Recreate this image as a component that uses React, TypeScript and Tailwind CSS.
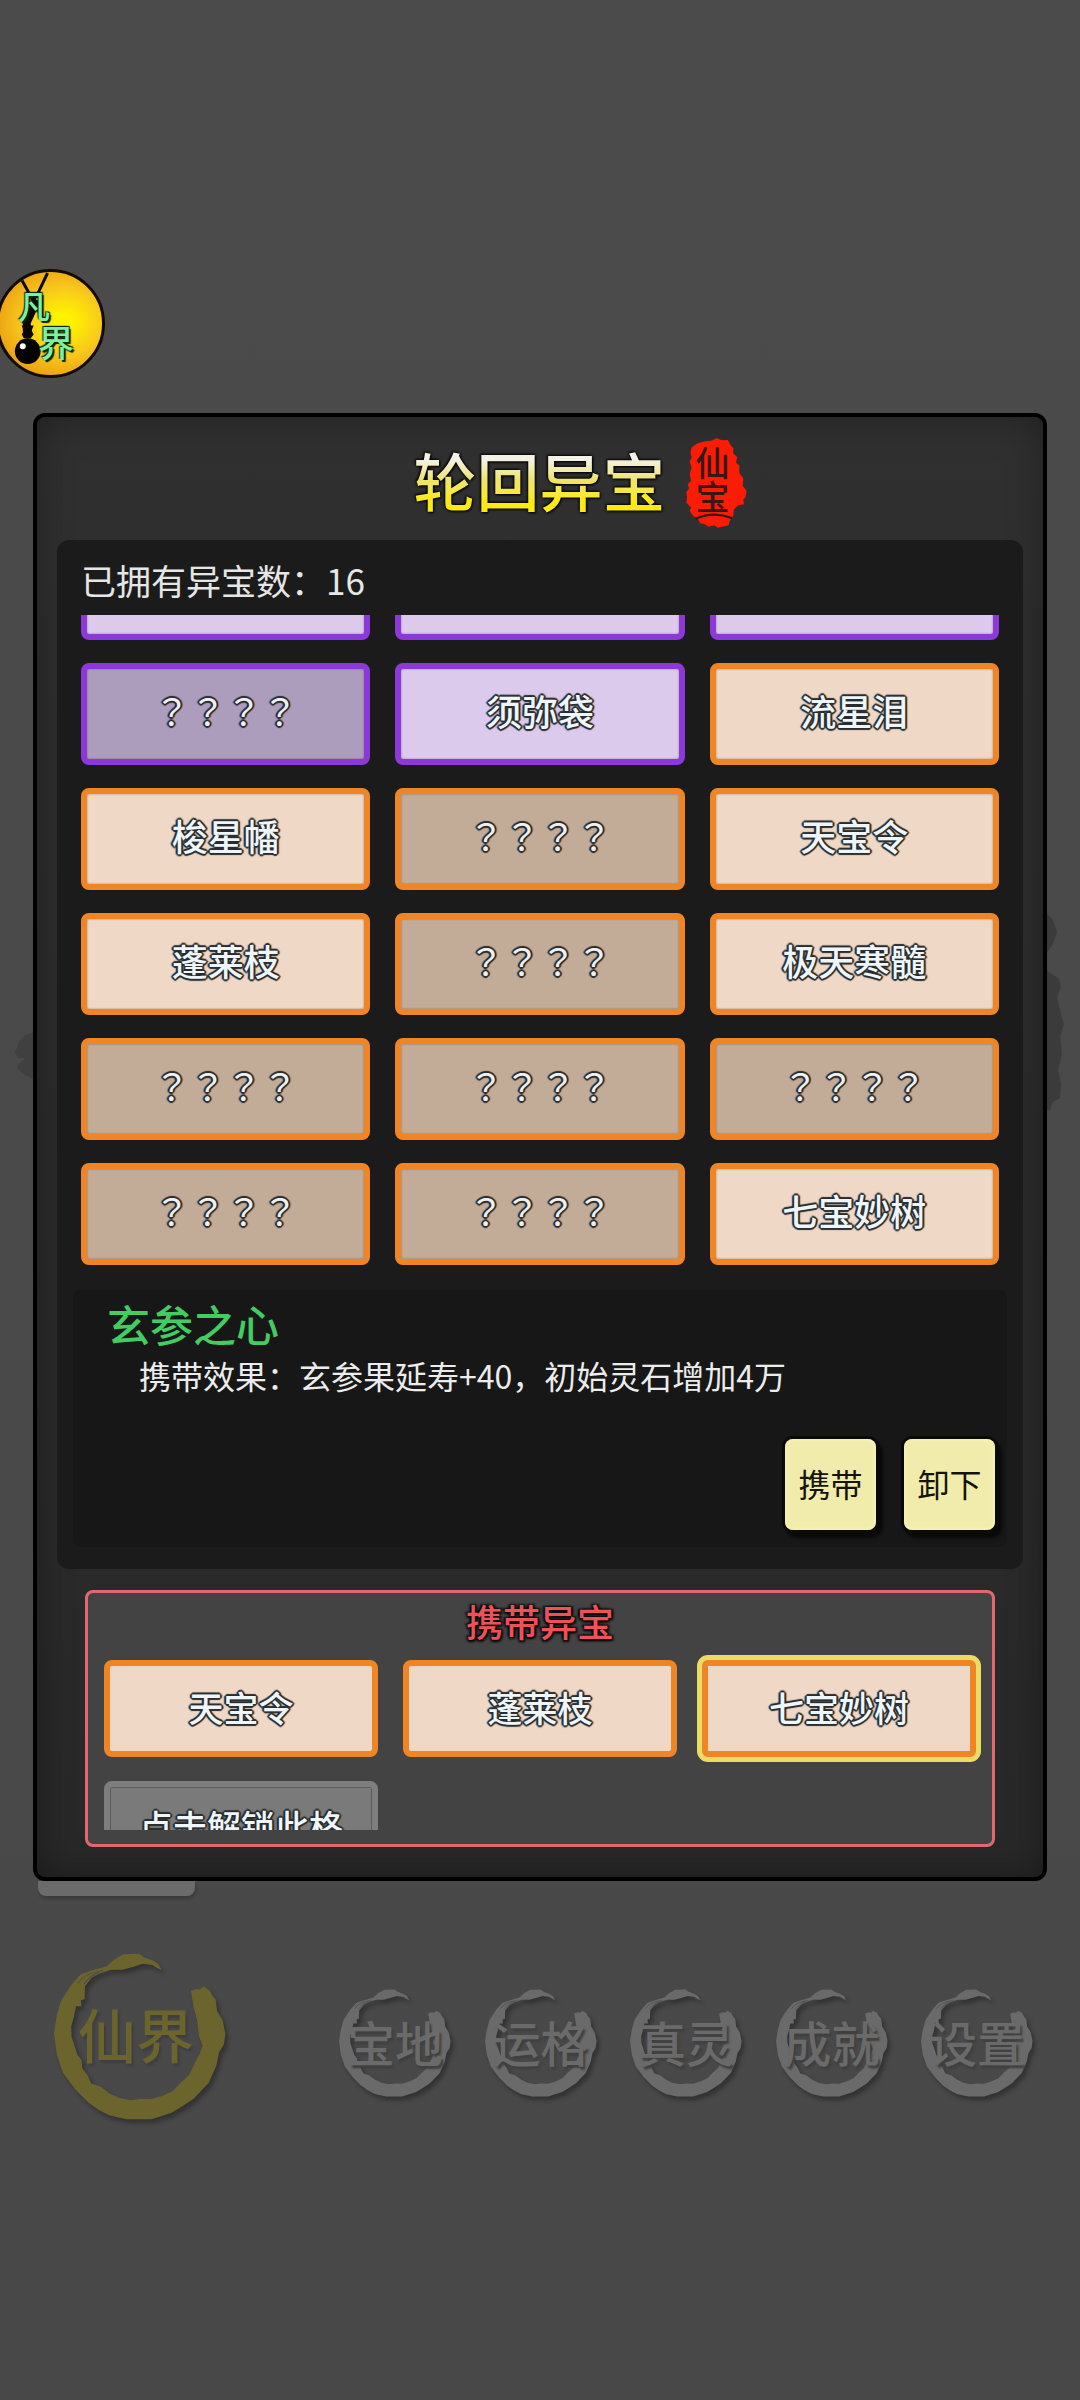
type Treasure = { name: string; tone: "purple" | "orange"; owned: boolean };

const UNKNOWN = "？？？？";

const treasures: Treasure[] = [
  { name: "", tone: "purple", owned: true },
  { name: "", tone: "purple", owned: true },
  { name: "", tone: "purple", owned: true },
  { name: UNKNOWN, tone: "purple", owned: false },
  { name: "须弥袋", tone: "purple", owned: true },
  { name: "流星泪", tone: "orange", owned: true },
  { name: "梭星幡", tone: "orange", owned: true },
  { name: UNKNOWN, tone: "orange", owned: false },
  { name: "天宝令", tone: "orange", owned: true },
  { name: "蓬莱枝", tone: "orange", owned: true },
  { name: UNKNOWN, tone: "orange", owned: false },
  { name: "极天寒髓", tone: "orange", owned: true },
  { name: UNKNOWN, tone: "orange", owned: false },
  { name: UNKNOWN, tone: "orange", owned: false },
  { name: UNKNOWN, tone: "orange", owned: false },
  { name: UNKNOWN, tone: "orange", owned: false },
  { name: UNKNOWN, tone: "orange", owned: false },
  { name: "七宝妙树", tone: "orange", owned: true },
];

const carried = ["天宝令", "蓬莱枝", "七宝妙树"];
const navItems = ["宝地", "运格", "真灵", "成就", "设置"];

const inked =
  "[text-shadow:1px_1px_1px_#2a2e30,-1px_-1px_1px_#2a2e30,1px_-1px_1px_#2a2e30,-1px_1px_1px_#2a2e30,0_2px_1px_#2a2e30,2px_0_1px_#2a2e30,-2px_0_1px_#2a2e30,0_-2px_1px_#2a2e30]";

function cellTone(t: Treasure) {
  if (t.tone === "purple") {
    return t.owned ? "border-[#8d38d8] bg-[#dbcaeb]" : "border-[#8d38d8] bg-[#ad9dbc]";
  }
  return t.owned ? "border-[#ef8524] bg-[#efd9c6]" : "border-[#ef8524] bg-[#c2ab97]";
}

function TreasureCell({ item }: { item: Treasure }) {
  return (
    <button
      type="button"
      aria-label={item.name || "异宝"}
      className={`flex h-[102px] items-center justify-center rounded-lg border-6 pb-2 shadow-[inset_0_0_2px_rgba(90,60,60,0.6)] ${cellTone(item)}`}
    >
      <span
        className={`text-4xl leading-none ${item.owned ? "font-medium text-[#eef6fa]" : "font-['Noto_Sans_CJK_TC',sans-serif] font-normal text-[#f0f0f0]"} ${inked}`}
      >
        {item.name}
      </span>
    </button>
  );
}

function BrushRing({ className }: { className: string }) {
  return (
    <svg viewBox="98 98 500 502" preserveAspectRatio="none" className={className} aria-hidden="true">
      <path
        fill="currentColor"
        d="M496 212 L512 206 L522 208 L533 199 L550 210 L556 222 L568 238 L572 272 L588 300 L596 340 L592 372 L578 396 L570 436 L548 488 L504 536 L472 558 L440 578 L404 590 L380 598 L310 598 L282 592 L258 586 L228 570 L196 546 L160 508 L124 458 L106 402 L98 340 L106 288 L118 242 L148 194 L176 162 L210 150 L236 142 L252 138 L272 118 L300 102 L345 100 L362 112 L384 120 L402 132 L411 150 L398 143 L384 134 L355 130 L330 139 L296 148 L262 148 L228 160 L208 172 L188 198 L187 236 L176 240 L178 258 L162 258 L156 290 L148 318 L149 350 L160 384 L166 404 L178 420 L180 444 L196 466 L206 490 L234 500 L260 520 L288 534 L320 541 L350 537 L380 538 L412 528 L444 513 L466 488 L490 466 L508 428 L522 400 L530 376 L520 350 L514 300 L504 262 Z"
      />
      <g stroke="#4a4a4a" strokeWidth="3" fill="none" strokeLinecap="round">
        <path d="M168 188 Q188 160 226 154" />
        <path d="M186 190 Q204 164 240 150" />
      </g>
    </svg>
  );
}

function RealmBadge() {
  return (
    <button
      type="button"
      aria-label="凡界"
      className="relative -ml-1 block size-[109px] overflow-hidden rounded-full border-3 border-[#120c04] bg-radial-[at_62%_48%] from-[#fff200] from-10% via-[#f8c81c] via-45% to-[#e8950f] to-85%"
    >
      <svg viewBox="0 0 104 104" className="absolute inset-0 size-full" aria-hidden="true">
        <path d="M23 8 L34 28 M49 1 L40 20 L34 30" fill="none" stroke="#0b0700" strokeWidth="3" />
        <path d="M34 26 L42 30 L32 52 L33 60 L24 60 L24 50 Z" fill="#0b0700" />
        <path d="M23 54 h12 l-2 5 l2 4 l-3 4 h-7 l-2 -4 l2 -4 z" fill="#0b0700" />
        <circle cx="29" cy="80" r="13" fill="#050300" />
        <circle cx="24" cy="75" r="3" fill="#ffffff" />
      </svg>
      <span className="absolute top-[17px] left-[19px] text-[32px] leading-none font-medium text-[#7df0a4] [text-shadow:2px_2px_1px_#06250f,-1px_-1px_1px_#06250f,1px_-1px_1px_#06250f]">
        凡
      </span>
      <span className="absolute top-[51px] left-[39px] text-[36px] leading-none font-medium text-[#7df0a4] [text-shadow:2px_2px_1px_#06250f,-1px_-1px_1px_#06250f,1px_-1px_1px_#06250f]">
        界
      </span>
    </button>
  );
}

function Seal() {
  return (
    <div className="relative flex h-[90px] w-[61px] justify-center">
      <svg viewBox="915 82 182 272" preserveAspectRatio="none" className="absolute inset-0 size-full" aria-hidden="true">
        <path
          fill="#fb1c05"
          d="M932 110 L950 98 L972 92 L990 90 L1006 83 L1022 89 L1040 88 L1048 104 L1056 112 L1056 128 L1068 140 L1064 156 L1074 166 L1074 188 L1086 204 L1084 226 L1096 242 L1092 262 L1086 268 L1088 282 L1070 286 L1058 298 L1056 316 L1046 332 L1042 346 L1022 350 L1010 353 L1000 346 L982 350 L970 342 L958 340 L950 326 L936 318 L926 302 L930 292 L916 278 L918 262 L916 246 L924 234 L920 222 L930 212 L926 190 L932 172 L926 154 L932 140 L928 126 Z"
        />
        <path d="M944 326 Q996 302 1052 324" fill="none" stroke="#3a1713" strokeWidth="7" />
      </svg>
      <span className="relative pt-2 pr-2 text-[34px] leading-[48px] font-medium text-[#3a1713] [writing-mode:vertical-rl]">
        仙宝
      </span>
    </div>
  );
}

export default function App() {
  return (
    <main className="relative min-h-screen overflow-hidden bg-linear-to-b from-[#4b4b4b] to-[#484848] pt-[269px] font-['Noto_Sans_CJK_SC',sans-serif]">
      <svg viewBox="0 0 20 200" className="absolute top-[912px] right-[14px] h-[200px] w-5" aria-hidden="true">
        <path
          fill="#3b3b3b"
          d="M0 0 L7 8 L11 20 L7 32 L0 42 Z M0 58 L12 66 L15 74 L11 86 L15 102 L18 112 L14 124 L16 142 L12 158 L15 172 L14 186 L7 190 L4 198 L0 198 Z"
        />
      </svg>
      <svg viewBox="0 0 20 50" className="absolute top-[1030px] left-[15px] h-[50px] w-5" aria-hidden="true">
        <path fill="#404040" d="M20 2 L10 5 L4 12 L0 22 L3 28 L10 28 L4 34 L2 38 L8 44 L20 50 Z" />
      </svg>

      <RealmBadge />

      <section className="relative mx-[33px] mt-[35px] rounded-xl border-4 border-black bg-linear-to-b from-[#303030] to-[#282828] px-5 pb-[30px] shadow-[inset_0_0_36px_rgba(0,0,0,0.35)]">
        <header className="flex h-[123px] items-center justify-center gap-5 pl-20">
          <h1 className="bg-linear-to-b from-[#f4f2e6] from-25% via-[#eee46c] via-50% to-[#fbea12] to-75% bg-clip-text text-[63px] leading-[80px] font-medium text-transparent filter-[drop-shadow(1px_1px_1px_#000)_drop-shadow(-1px_-1px_1px_#000)]">
            轮回异宝
          </h1>
          <div className="pt-2">
            <Seal />
          </div>
        </header>

        <div className="rounded-xl bg-[#1b1b1b] px-4 pt-4 pb-[22px]">
          <p className="mb-[11px] px-2 text-[35px] leading-[48px] text-[#e6e6e6]">已拥有异宝数：16</p>

          <div className="mx-2 flex h-[650px] flex-col justify-end overflow-hidden">
            <div className="grid grid-cols-3 gap-x-[25px] gap-y-[23px]">
              {treasures.map((item, i) => (
                <TreasureCell key={i} item={item} />
              ))}
            </div>
          </div>

          <div className="mt-[25px] rounded-lg bg-[#171717] pt-2 pr-3 pb-[17px] pl-[34px]">
            <h2 className="text-[43px] leading-[50px] font-medium text-[#42cc62]">玄参之心</h2>
            <p className="pt-1 pl-8 text-[32px] leading-[46px] text-[#ececec]">
              携带效果：玄参果延寿+40，初始灵石增加4万
            </p>
            <div className="mt-[41px] flex justify-end gap-7">
              {["携带", "卸下"].map((label) => (
                <button
                  key={label}
                  type="button"
                  className="size-[91px] rounded-lg bg-[#f1ecab] pb-1 text-[32px] text-[#14140c] shadow-[0_0_0_3px_#0a0a08,4px_5px_3px_3px_#0a0a0a,inset_0_0_4px_#fffbc0]"
                >
                  {label}
                </button>
              ))}
            </div>
          </div>
        </div>

        <section className="mx-7 mt-[21px] h-[257px] rounded-lg border-3 border-[#e3686d] bg-[#434343] px-4">
          <h2 className="text-center text-[37px] leading-[56px] font-medium text-[#ee5158] [text-shadow:2px_2px_2px_#0c0c0c,-2px_-1px_2px_#0c0c0c,2px_-1px_2px_#0c0c0c,-1px_2px_2px_#0c0c0c]">
            携带异宝
          </h2>
          <div className="-mx-2 mt-1 h-[177px] overflow-hidden px-2 pt-[7px]">
            <div className="grid grid-cols-3 gap-x-[25px] gap-y-6">
              {carried.map((name, i) => (
                <button
                  key={name}
                  type="button"
                  className={`flex h-[97px] items-center justify-center border-6 border-[#ef8524] bg-[#efd9c6] pb-1 ${i === 2 ? "rounded-md shadow-[0_0_0_5px_#e9dd66]" : "rounded-lg"}`}
                >
                  <span className={`text-[35px] leading-none font-medium text-[#eef6fa] ${inked}`}>{name}</span>
                </button>
              ))}
              <button
                type="button"
                className="flex h-[97px] items-center justify-center rounded-lg border-6 border-[#7e7e7e] bg-[#7a7a7a] pb-2 shadow-[inset_0_0_0_1px_#5c5c5c]"
              >
                <span className={`text-[34px] leading-none font-medium whitespace-nowrap text-[#eef6fa] ${inked}`}>
                  点击解锁此格
                </span>
              </button>
            </div>
          </div>
        </section>
      </section>

      <div className="ml-[38px] h-[15px] w-[157px] rounded-b-lg bg-[#6b6b6b] shadow-[1px_3px_3px_#3c3c3c]" />

      <nav className="mt-[57px] flex items-center pr-[47px] pl-[54px]">
        <a href="#realm" className="relative flex h-[167px] w-[172px] shrink-0 items-center justify-center text-[#6b652d]">
          <BrushRing className="absolute inset-0 size-full drop-shadow-[3px_4px_2px_rgba(0,0,0,0.3)]" />
          <span className="relative pr-2 pb-2 text-[58px] leading-none font-medium [text-shadow:2px_3px_2px_#3f3f3f]">仙界</span>
        </a>
        <div className="ml-[113px] flex flex-1 justify-between pt-3">
          {navItems.map((label) => (
            <a
              key={label}
              href={`#${label}`}
              className="relative flex h-[108px] w-[112px] items-center justify-center text-[#6a6a6a]"
            >
              <BrushRing className="absolute inset-0 size-full drop-shadow-[3px_4px_2px_rgba(0,0,0,0.3)]" />
              <span className="relative pb-1 text-5xl leading-none font-medium [text-shadow:2px_3px_2px_#404040]">{label}</span>
            </a>
          ))}
        </div>
      </nav>
    </main>
  );
}
